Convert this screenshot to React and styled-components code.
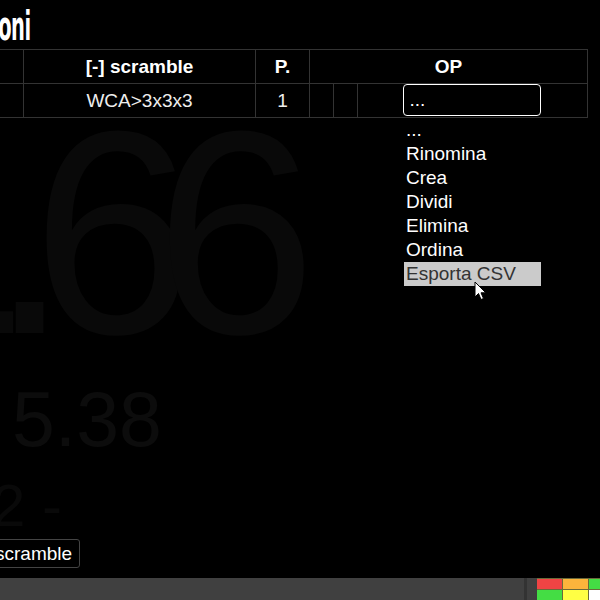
import React from "react";
import styled, { createGlobalStyle } from "styled-components";

const Global = createGlobalStyle`
  html, body {
    margin: 0;
    padding: 0;
    background: #000;
    overflow: hidden;
  }
  * { box-sizing: border-box; }
`;

const Page = styled.div`
  width: 600px;
  height: 600px;
  display: flex;
  flex-direction: column;
  background: #000;
  color: #fff;
  font-family: "Liberation Sans", Arial, sans-serif;
  overflow: hidden;
`;

const Content = styled.div`
  flex: 1;
  margin-left: -64px;
  padding-top: 6px;
  display: flex;
  flex-direction: column;
  align-items: flex-start;
`;

const Title = styled.h1`
  margin: 0 0 3px 8px;
  height: 40px;
  line-height: 40px;
  font-family: "DejaVu Sans Condensed", "DejaVu Sans", sans-serif;
  font-weight: 700;
  font-size: 40px;
  letter-spacing: -1px;
  transform: scaleX(0.54);
  transform-origin: left center;
  white-space: nowrap;
`;

const Table = styled.table`
  border-collapse: collapse;
  table-layout: fixed;
  width: 651px;
  font-size: 19px;

  th, td {
    border: 1px solid #333;
    height: 34px;
    padding: 0;
    text-align: center;
    vertical-align: middle;
  }

  th { font-weight: 700; color: #fff; }
  td { font-weight: 400; color: #eee; }
`;

const OpCell = styled.td`
  position: relative;
`;

const Select = styled.select`
  appearance: none;
  -webkit-appearance: none;
  display: block;
  position: relative;
  left: -1px;
  top: -1px;
  margin: 0 auto;
  width: 138px;
  height: 32px;
  border: 1px solid #fff;
  border-radius: 4px;
  background: #000;
  color: #fff;
  font-family: "Liberation Sans", Arial, sans-serif;
  font-size: 19px;
  padding: 0 6px;
  outline: none;
`;

const Menu = styled.ul`
  position: absolute;
  top: 34px;
  left: 46px;
  width: 137px;
  margin: 0;
  padding: 0;
  list-style: none;
  text-align: left;
  z-index: 2;
`;

const MenuItem = styled.li`
  height: 24px;
  line-height: 24px;
  padding-left: 2px;
  font-size: 19px;
  color: ${(p) => (p.$active ? "#333" : "#fff")};
  background: ${(p) => (p.$active ? "#cbcbcb" : "transparent")};
  white-space: nowrap;
`;

const Cursor = styled.svg`
  position: absolute;
  left: 70px;
  top: 163px;
  width: 13px;
  height: 20px;
`;

const BigTime = styled.div`
  margin: 8px 0 0 -70px;
  height: 212px;
  line-height: 212px;
  font-size: 290px;
  letter-spacing: -38px;
  color: #090909;
  white-space: nowrap;
`;

const SubTime = styled.div`
  margin: 53px 0 0 76px;
  height: 56px;
  line-height: 56px;
  font-size: 77px;
  color: #0c0c0c;
  white-space: nowrap;
`;

const SmallTime = styled.div`
  margin: 34px 0 0 56px;
  height: 50px;
  line-height: 50px;
  font-size: 60px;
  color: #090909;
  white-space: nowrap;
`;

const Button = styled.button`
  margin: 8px 0 0 50px;
  height: 29px;
  padding: 0 7px 0 8px;
  background: #000;
  color: #fff;
  border: 1px solid #444;
  border-radius: 3px;
  font-family: "Liberation Sans", Arial, sans-serif;
  font-size: 19px;
`;

const BottomBar = styled.div`
  height: 22px;
  background: #404040;
  display: flex;
  justify-content: flex-end;
`;

const Divider = styled.div`
  width: 3px;
  margin-right: 10px;
  background: #333;
`;

const Swatches = styled.div`
  display: grid;
  grid-template-columns: 25px 25px 12px;
  grid-template-rows: 10px 11px;
  gap: 1px;
  padding-top: 1px;
  background: #6a6a3a;
  width: 63px;
`;

const Swatch = styled.div`
  background: ${(p) => p.$color};
`;

const options = ["...", "Rinomina", "Crea", "Dividi", "Elimina", "Ordina", "Esporta CSV"];
const swatches = ["#f04444", "#fbb43c", "#44dd44", "#44dd44", "#ffff44", "#ffffff"];

export default function App() {
  return (
    <>
      <Global />
      <Page>
        <Content>
          <Title>Sessioni</Title>
          <Table>
            <colgroup>
              <col style={{ width: 87 }} />
              <col style={{ width: 232 }} />
              <col style={{ width: 54 }} />
              <col style={{ width: 24 }} />
              <col style={{ width: 24 }} />
              <col style={{ width: 230 }} />
            </colgroup>
            <thead>
              <tr>
                <th></th>
                <th>[-] scramble</th>
                <th>P.</th>
                <th colSpan={3}>OP</th>
              </tr>
            </thead>
            <tbody>
              <tr>
                <td></td>
                <td>WCA&gt;3x3x3</td>
                <td>1</td>
                <td></td>
                <td></td>
                <OpCell>
                  <Select defaultValue="...">
                    {options.map((o) => (
                      <option key={o}>{o}</option>
                    ))}
                  </Select>
                  <Menu>
                    {options.map((o) => (
                      <MenuItem key={o} $active={o === "Esporta CSV"}>
                        {o}
                      </MenuItem>
                    ))}
                    <Cursor viewBox="0 0 13 20">
                      <path
                        d="M1 1 L1 16 L4.5 12.5 L7 18.5 L9.5 17.5 L7 11.8 L11.8 11.8 Z"
                        fill="#fff"
                        stroke="#000"
                        strokeWidth="1"
                        strokeLinejoin="round"
                      />
                    </Cursor>
                  </Menu>
                </OpCell>
              </tr>
            </tbody>
          </Table>
          <BigTime>1.66</BigTime>
          <SubTime>5.38</SubTime>
          <SmallTime>2 -</SmallTime>
          <Button>scramble</Button>
        </Content>
        <BottomBar>
          <Divider />
          <Swatches>
            {swatches.map((c, i) => (
              <Swatch key={i} $color={c} />
            ))}
          </Swatches>
        </BottomBar>
      </Page>
    </>
  );
}
